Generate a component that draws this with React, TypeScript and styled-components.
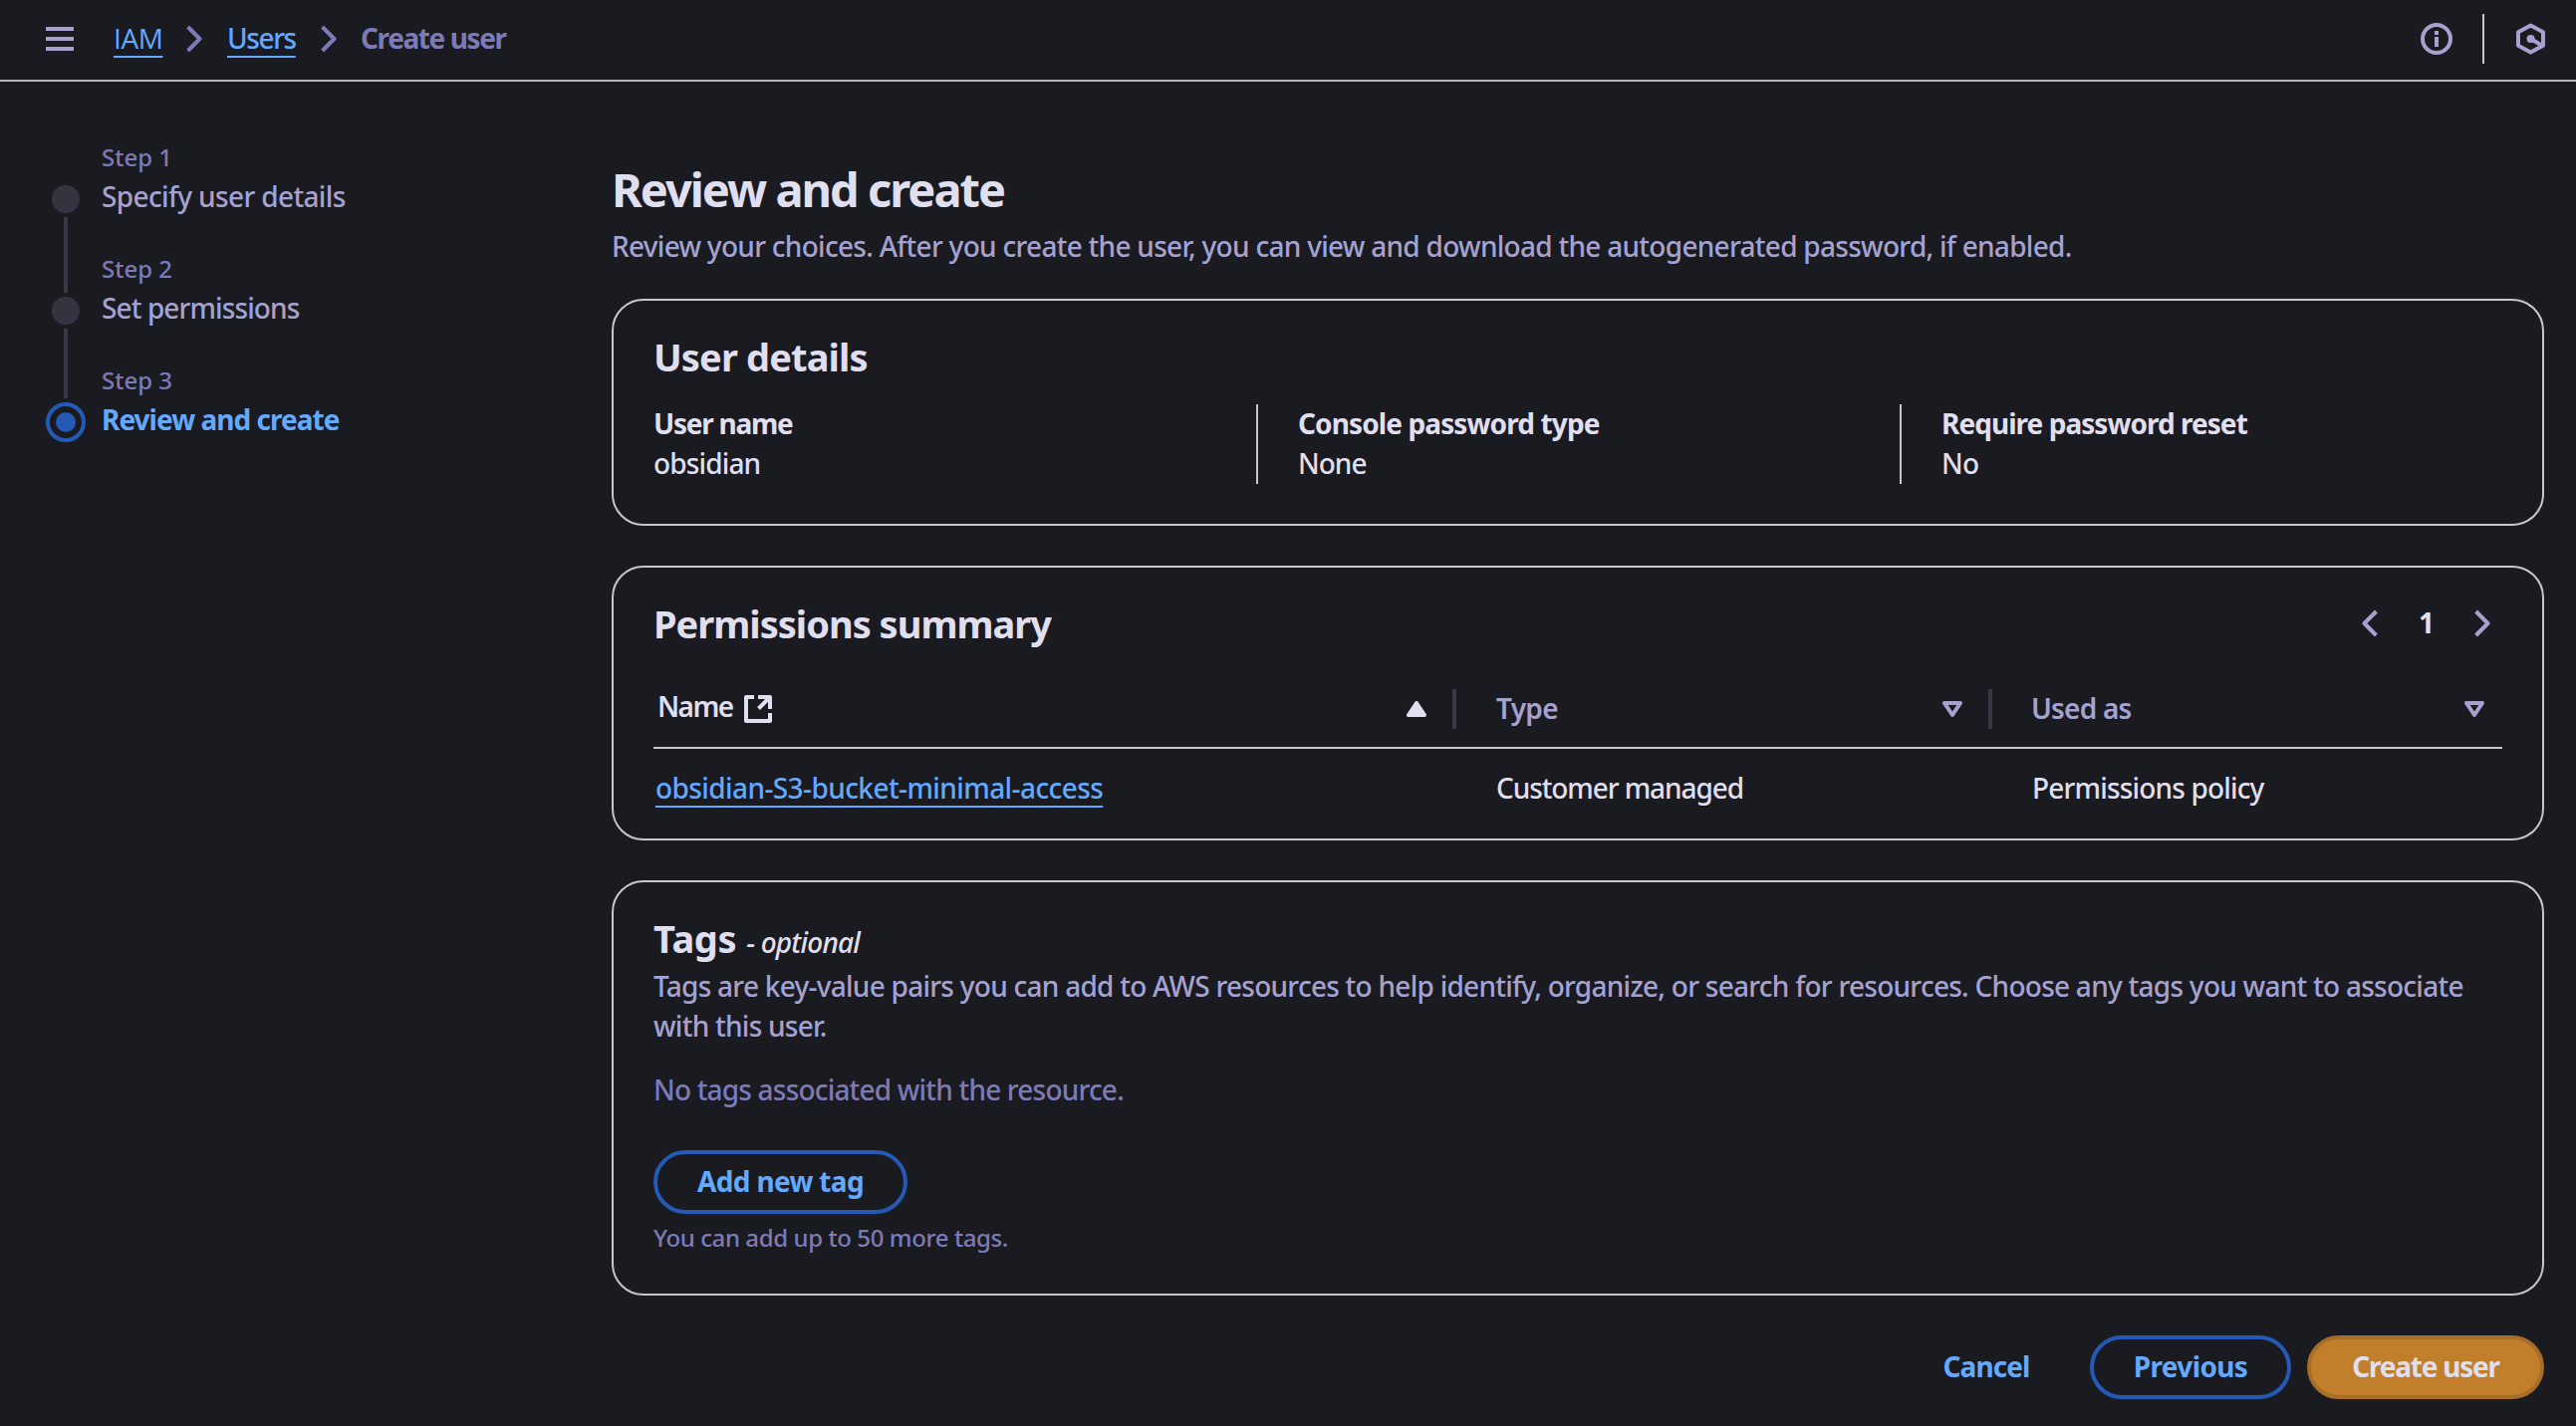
import React from 'react';
import styled, { createGlobalStyle } from 'styled-components';

const color = {
  bg: '#1a1b20',
  text: '#e0dfef',
  label: '#a5a2d1',
  muted: '#7d7ab8',
  link: '#62a9ff',
  blue: '#2459b6',
  line: '#c6c6cd',
  headerLine: '#b6b6be',
  track: '#393847',
  dot: '#333440',
  orange: '#c27f2b',
  orangeEdge: '#a86e28',
};

const Global = createGlobalStyle`
  *, *::before, *::after { box-sizing: border-box; }
  body {
    margin: 0;
    background: ${color.bg};
    color: ${color.text};
    font-family: "Noto Sans", "Open Sans", sans-serif;
    font-size: 28px;
    font-weight: 500;
    line-height: 40px;
  }
  h1, h2, p, ol, ul { margin: 0; padding: 0; list-style: none; }
  svg { display: block; flex: none; }
`;

interface Track {
  $ls?: number;
}
const tracking = ({ $ls = 0 }: Track) => `letter-spacing: ${$ls}px;`;

/* ---------- header ---------- */

const Header = styled.header`
  display: flex;
  align-items: center;
  height: 82px;
  padding: 0 31px 2px 46px;
  border-bottom: 2px solid ${color.headerLine};
  white-space: nowrap;
`;

const MenuButton = styled.div`
  display: flex;
  flex-direction: column;
  gap: 6px;
  width: 28px;
  margin-right: 40px;
`;

const MenuBar = styled.span`
  height: 4px;
  background: ${color.label};
`;

const Breadcrumbs = styled.nav`
  display: flex;
  align-items: center;
  flex: 1;
`;

const CrumbSlot = styled.span<{ $width: number }>`
  width: ${p => p.$width}px;
  padding-bottom: 2px;
`;

const Crumb = styled.a<Track & { $font?: string }>`
  color: ${color.link};
  ${p => p.$font && `font-family: "${p.$font}", sans-serif;`}
  text-decoration: underline;
  text-decoration-thickness: 2px;
  text-underline-offset: 7px;
  ${tracking}
`;

const CurrentCrumb = styled.span<Track>`
  margin-left: -1px;
  padding-bottom: 2px;
  color: ${color.muted};
  font-weight: 700;
  ${tracking}
`;

const CrumbSeparator = styled.span`
  margin: 0 25px;
`;

const Tools = styled.div`
  display: flex;
  align-items: center;
`;

const ToolDivider = styled.span`
  width: 2px;
  height: 50px;
  margin: 0 32px 0 30px;
  background: ${color.line};
`;

/* ---------- wizard navigation ---------- */

const Page = styled.div`
  display: flex;
`;

const Sidebar = styled.nav`
  display: flex;
  flex: none;
  width: 614px;
  padding: 60px 0 0 46px;
`;

const Markers = styled.div`
  display: flex;
  flex-direction: column;
  align-items: center;
  gap: 4px;
  width: 40px;
  padding-top: 44px;
  margin-right: 16px;
`;

const Dot = styled.span`
  width: 28px;
  height: 28px;
  border-radius: 50%;
  background: ${color.dot};
`;

const Connector = styled.span<{ $height: number }>`
  width: 4px;
  height: ${p => p.$height}px;
  background: ${color.track};
`;

const ActiveMarker = styled.span`
  display: flex;
  align-items: center;
  justify-content: center;
  width: 40px;
  height: 40px;
  border: 4px solid ${color.blue};
  border-radius: 50%;

  &::after {
    content: "";
    width: 20px;
    height: 20px;
    border-radius: 50%;
    background: ${color.blue};
  }
`;

const Step = styled.li`
  height: 112px;
`;

const StepLabel = styled.div`
  margin-bottom: 3px;
  color: ${color.muted};
  font-size: 24px;
  line-height: 32px;
`;

const StepTitle = styled.div<Track & { $active?: boolean }>`
  color: ${p => (p.$active ? color.link : color.label)};
  font-weight: ${p => (p.$active ? 700 : 500)};
  ${tracking}
`;

/* ---------- content ---------- */

const Main = styled.main`
  flex: 1;
  min-width: 0;
  padding: 78px 32px 0 0;
`;

const PageTitle = styled.h1<Track>`
  margin-bottom: 7px;
  font-size: 47px;
  font-weight: 700;
  line-height: 60px;
  ${tracking}
`;

const Description = styled.p<Track & { $muted?: boolean }>`
  color: ${p => (p.$muted ? color.muted : color.label)};
  ${tracking}
`;

const Cards = styled.div`
  display: flex;
  flex-direction: column;
  gap: 40px;
  margin: 33px 0 40px;
`;

const Card = styled.section<{ $height: number }>`
  height: ${p => p.$height}px;
  padding: 32px 40px 0;
  border: 2px solid ${color.line};
  border-radius: 32px;
`;

const CardHeader = styled.div`
  display: flex;
  align-items: center;
  justify-content: space-between;
  height: 48px;
`;

const CardTitle = styled.h2<Track>`
  height: 48px;
  font-size: 38px;
  font-weight: 700;
  line-height: 48px;
  ${tracking}
`;

const Optional = styled.i`
  margin-left: 10px;
  font-size: 28px;
  font-weight: 500;
  line-height: 1;
  letter-spacing: -0.8px;
`;

const Details = styled.div`
  display: grid;
  grid-template-columns: 605px 646px 1fr;
  margin-top: 24px;
`;

const Detail = styled.div`
  height: 80px;

  & + & {
    padding-left: 40px;
    border-left: 2px solid ${color.line};
  }
`;

const DetailLabel = styled.div<Track>`
  margin-top: -1px;
  font-weight: 700;
  ${tracking}
`;

const DetailValue = styled.div<Track>`
  ${tracking}
`;

const Pagination = styled.div`
  display: flex;
  align-items: center;
  gap: 41px;
  padding-right: 12px;
`;

const PageNumber = styled.span`
  width: 15px;
  padding-bottom: 2px;
  font-weight: 700;
`;

const Row = styled.div<{ $head?: boolean }>`
  display: grid;
  grid-template-columns: 806px 538px 1fr;
  height: 78px;
  margin-top: ${p => (p.$head ? 24 : 0)}px;
  ${p => p.$head && `border-bottom: 2px solid ${color.line};`}
`;

const HeadCell = styled.div<{ $first?: boolean; $last?: boolean }>`
  display: flex;
  align-items: center;
  justify-content: space-between;
  padding-left: ${p => (p.$first ? 4 : p.$last ? 39 : 40)}px;
  padding-right: ${p => (p.$last ? 18 : 0)}px;
  color: ${p => (p.$first ? color.text : color.label)};
`;

const HeadLabel = styled.span<Track & { $raised?: boolean }>`
  display: flex;
  align-items: center;
  gap: 12px;
  font-weight: 600;
  ${tracking}

  & > span { padding-bottom: ${p => (p.$raised ? 6 : 2)}px; }
`;

const SortGroup = styled.span`
  display: flex;
  align-items: center;
  gap: 26px;
`;

const ColumnDivider = styled.span`
  width: 4px;
  height: 40px;
  background: ${color.track};
`;

const Cell = styled.div<Track & { $first?: boolean }>`
  display: flex;
  align-items: center;
  padding-left: ${p => (p.$first ? 2 : 40)}px;
  ${tracking}
`;

const PolicyLink = styled.a<Track>`
  color: ${color.link};
  text-decoration: underline;
  text-decoration-thickness: 2px;
  text-underline-offset: 7px;
  ${tracking}
`;

const Button = styled.button<Track & { $width: number; $primary?: boolean }>`
  display: flex;
  align-items: center;
  justify-content: center;
  width: ${p => p.$width}px;
  height: 64px;
  padding: 0 0 2px;
  border: 4px solid ${p => (p.$primary ? color.orangeEdge : color.blue)};
  border-radius: 32px;
  background: ${p => (p.$primary ? color.orange : 'transparent')};
  color: ${p => (p.$primary ? color.text : color.link)};
  font: 700 28px/40px "Noto Sans", sans-serif;
  ${tracking}
`;

const CancelButton = styled(Button)`
  margin-right: 28px;
  border: 0;
`;

const TagBody = styled.div`
  display: flex;
  flex-direction: column;
  margin-top: 4px;
`;

const EmptyTags = styled.div`
  margin: 24px 0 41px;
`;

const Hint = styled.div`
  margin-top: 8px;
  color: ${color.muted};
  font-size: 24px;
  line-height: 32px;
  letter-spacing: -0.4px;
`;

const Actions = styled.footer`
  display: flex;
  justify-content: flex-end;
  gap: 16px;
`;

/* ---------- icons ---------- */

const Chevron = ({ tone, left }: { tone: string; left?: boolean }) => (
  <svg width="16" height="28" viewBox="0 0 16 28" fill="none" stroke={tone} strokeWidth="4">
    <path d={left ? 'M14.4 2 L2.5 14 L14.4 26' : 'M1.6 2 L13.5 14 L1.6 26'} strokeLinejoin="round" />
  </svg>
);

const InfoIcon = () => (
  <svg width="32" height="32" viewBox="0 0 32 32" fill="none" stroke={color.label} strokeWidth="4">
    <circle cx="16" cy="16" r="14" />
    <path d="M16 8v4M16 14v10" />
  </svg>
);

const HexagonIcon = () => (
  <svg width="29" height="32" viewBox="0 0 29 32" fill="none" stroke={color.label} strokeWidth="4">
    <path d="M14.5 2.4 L27 9.2 V22.8 L14.5 29.6 L2 22.8 V9.2 Z" strokeLinejoin="round" />
    <circle cx="14.5" cy="16" r="4" fill={color.label} stroke="none" />
    <path d="M14.5 16 L25.5 22.4" />
  </svg>
);

const ExternalIcon = () => (
  <svg width="28" height="28" viewBox="0 0 28 28" fill="none" stroke={color.text} strokeWidth="4">
    <path d="M10 2H2V26H26V18M14 2H26V14" strokeLinejoin="round" />
    <path d="M26 2L14.5 13.5" />
  </svg>
);

const SortIcon = ({ up }: { up?: boolean }) => (
  <svg width="20" height="16" viewBox="0 0 20 16" strokeWidth="4" strokeLinejoin="round"
    fill={up ? color.text : 'none'} stroke={up ? color.text : color.label}>
    <path d={up ? 'M2 14H18L10 2Z' : 'M2 2H18L10 14Z'} />
  </svg>
);

/* ---------- page ---------- */

export default function App() {
  return (
    <>
      <Global />
      <Header>
        <MenuButton><MenuBar /><MenuBar /><MenuBar /></MenuButton>
        <Breadcrumbs>
          <CrumbSlot $width={48}><Crumb $font="Open Sans" $ls={-0.4}>IAM</Crumb></CrumbSlot>
          <CrumbSeparator><Chevron tone={color.muted} /></CrumbSeparator>
          <CrumbSlot $width={69}><Crumb $ls={-1.4}>Users</Crumb></CrumbSlot>
          <CrumbSeparator><Chevron tone={color.muted} /></CrumbSeparator>
          <CurrentCrumb $ls={-1.4}>Create user</CurrentCrumb>
        </Breadcrumbs>
        <Tools>
          <InfoIcon />
          <ToolDivider />
          <HexagonIcon />
        </Tools>
      </Header>

      <Page>
        <Sidebar>
          <Markers>
            <Dot />
            <Connector $height={76} />
            <Dot />
            <Connector $height={70} />
            <ActiveMarker />
          </Markers>
          <ol>
            <Step>
              <StepLabel>Step 1</StepLabel>
              <StepTitle $ls={-0.64}>Specify user details</StepTitle>
            </Step>
            <Step>
              <StepLabel>Step 2</StepLabel>
              <StepTitle $ls={-0.9}>Set permissions</StepTitle>
            </Step>
            <Step>
              <StepLabel>Step 3</StepLabel>
              <StepTitle $active $ls={-0.97}>Review and create</StepTitle>
            </Step>
          </ol>
        </Sidebar>

        <Main>
          <PageTitle $ls={-2}>Review and create</PageTitle>
          <Description $ls={-0.72}>
            Review your choices. After you create the user, you can view and download the autogenerated password, if enabled.
          </Description>

          <Cards>
            <Card $height={228}>
              <CardHeader><CardTitle $ls={-0.86}>User details</CardTitle></CardHeader>
              <Details>
                <Detail>
                  <DetailLabel $ls={-1.25}>User name</DetailLabel>
                  <DetailValue $ls={-0.86}>obsidian</DetailValue>
                </Detail>
                <Detail>
                  <DetailLabel $ls={-0.885}>Console password type</DetailLabel>
                  <DetailValue $ls={-1}>None</DetailValue>
                </Detail>
                <Detail>
                  <DetailLabel $ls={-0.957}>Require password reset</DetailLabel>
                  <DetailValue $ls={-0.8}>No</DetailValue>
                </Detail>
              </Details>
            </Card>

            <Card $height={276}>
              <CardHeader>
                <CardTitle $ls={-1}>Permissions summary</CardTitle>
                <Pagination>
                  <Chevron left tone={color.label} />
                  <PageNumber>1</PageNumber>
                  <Chevron tone={color.label} />
                </Pagination>
              </CardHeader>
              <Row $head>
                <HeadCell $first>
                  <HeadLabel $raised $ls={-1.6}><span>Name</span><ExternalIcon /></HeadLabel>
                  <SortGroup><SortIcon up /><ColumnDivider /></SortGroup>
                </HeadCell>
                <HeadCell>
                  <HeadLabel $ls={-0.7}><span>Type</span></HeadLabel>
                  <SortGroup><SortIcon /><ColumnDivider /></SortGroup>
                </HeadCell>
                <HeadCell $last>
                  <HeadLabel $ls={-0.8}><span>Used as</span></HeadLabel>
                  <SortIcon />
                </HeadCell>
              </Row>
              <Row>
                <Cell $first><PolicyLink $ls={-0.59}>obsidian-S3-bucket-minimal-access</PolicyLink></Cell>
                <Cell $ls={-1.09}>Customer managed</Cell>
                <Cell $ls={-0.835}>Permissions policy</Cell>
              </Row>
            </Card>

            <Card $height={417}>
              <CardTitle $ls={-0.4}>Tags<Optional>- optional</Optional></CardTitle>
              <TagBody>
                <Description $ls={-0.74}>
                  Tags are key-value pairs you can add to AWS resources to help identify, organize, or search for resources. Choose any tags you want to associate with this user.
                </Description>
                <EmptyTags><Description $muted $ls={-0.81}>No tags associated with the resource.</Description></EmptyTags>
                <Button $width={255} $ls={-0.66}>Add new tag</Button>
                <Hint>You can add up to 50 more tags.</Hint>
              </TagBody>
            </Card>
          </Cards>

          <Actions>
            <CancelButton $width={120} $ls={-0.94}>Cancel</CancelButton>
            <Button $width={202} $ls={-0.66}>Previous</Button>
            <Button $primary $width={238} $ls={-1.22}>Create user</Button>
          </Actions>
        </Main>
      </Page>
    </>
  );
}
